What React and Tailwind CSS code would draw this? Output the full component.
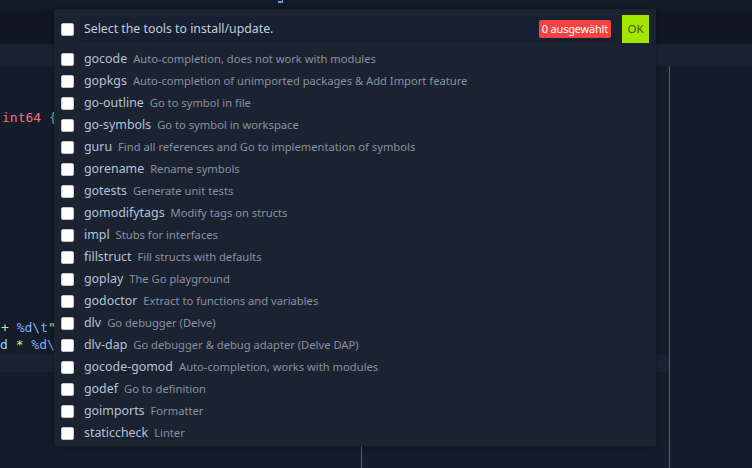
import React from 'react';

const tools = [
    ['gocode', 'Auto-completion, does not work with modules'],
    ['gopkgs', 'Auto-completion of unimported packages & Add Import feature'],
    ['go-outline', 'Go to symbol in file'],
    ['go-symbols', 'Go to symbol in workspace'],
    ['guru', 'Find all references and Go to implementation of symbols'],
    ['gorename', 'Rename symbols'],
    ['gotests', 'Generate unit tests'],
    ['gomodifytags', 'Modify tags on structs'],
    ['impl', 'Stubs for interfaces'],
    ['fillstruct', 'Fill structs with defaults'],
    ['goplay', 'The Go playground'],
    ['godoctor', 'Extract to functions and variables'],
    ['dlv', 'Go debugger (Delve)'],
    ['dlv-dap', 'Go debugger & debug adapter (Delve DAP)'],
    ['gocode-gomod', 'Auto-completion, works with modules'],
    ['godef', 'Go to definition'],
    ['goimports', 'Formatter'],
    ['staticcheck', 'Linter'],
];

function Box() {
    return <span className="w-[13px] h-[13px] bg-white rounded-[2px] shrink-0 border border-[#c8c8c8]" />;
}

export default function App() {
    return (
        <div className="relative w-[752px] h-[468px] overflow-hidden bg-[#151d2b] font-['Noto_Sans',sans-serif]">
            {/* editor background */}
            <div className="flex flex-col h-full">
                <div className="h-[9px] bg-[#151c29] shrink-0" />
                <div className="h-[35px] bg-[#111823] shrink-0" />
                <div className="h-[22px] bg-[#1b2332] shrink-0" />
                <div className="flex flex-1">
                    <div className="w-[669px] flex flex-col font-['DejaVu_Sans_Mono',monospace] text-[13px] leading-[17px]">
                        <div className="h-[43px]" />
                        <div className="pl-[2px] whitespace-nowrap">
                            <span className="text-[#f07178]">int64</span> <span className="text-[#4ec9b0]">{'{'}</span>
                        </div>
                        <div className="h-[193px]" />
                        <div className="whitespace-nowrap text-[#b8c0d0] pl-[1px]">
                            <span className="text-[#c3e88d]">+</span> <span className="text-[#82aaff]">%d\t</span><span className="text-[#c3e88d]">"</span>
                        </div>
                        <div className="whitespace-nowrap text-[#89ddff]">
                            <span>d</span> <span className="text-[#c3e88d]">*</span> <span className="text-[#82aaff]">%d\</span>
                        </div>
                        <div className="h-[17px] bg-[#1b2332] mt-[2px]" />
                        <div className="flex flex-1 pl-[361px]">
                            <div className="w-px bg-[#5a606a] mt-[73px]" />
                        </div>
                    </div>
                    <div className="w-px bg-[#5a606a]" />
                </div>
            </div>
            <div className="absolute left-[278px] top-0 w-[5px] h-[3px] border-b-2 border-r border-[#6a9de0]" />

            {/* quick pick overlay */}
            <div className="absolute left-[54px] top-[9px] w-[602px] h-[437px] bg-[#1b2331] shadow-[0_0_8px_rgba(0,0,0,0.35)] pt-[6px]">
                <div className="flex items-center h-[28px] pl-[7px] pr-[7px]">
                    <Box />
                    <div className="flex items-center ml-[6px] w-[535px] h-[25px] bg-[#172031] pl-[4px] pr-[4px]">
                        <span className="text-[12.3px] text-[#c5ccd8] flex-1">Select the tools to install/update.</span>
                        <span className="bg-[#f44141] text-white text-[11px] leading-[18px] px-[3px] rounded-[2px] tracking-[-0.2px]">0 ausgewählt</span>
                    </div>
                    <button className="ml-[7px] w-[27px] h-[28px] bg-[#a3e600] text-[#3d5a08] text-[11.5px]">OK</button>
                </div>
                <div className="flex flex-col mt-[5px]">
                    {tools.map(([name, desc]) => (
                        <div key={name} className="flex items-center h-[22px] pl-[7px] whitespace-nowrap">
                            <Box />
                            <span className="ml-[10px] text-[12.4px] text-[#b4c2d8]">{name}</span>
                            <span className="ml-[6px] text-[11.2px] text-[#8791a2]">{desc}</span>
                        </div>
                    ))}
                </div>
            </div>
        </div>
    );
}
